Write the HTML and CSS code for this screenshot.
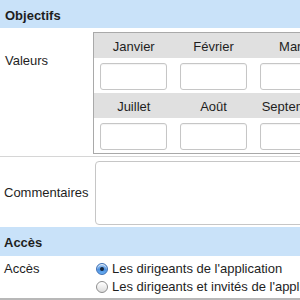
FILE: index.html
```html
<!DOCTYPE html>
<html lang="fr">
<head>
    <meta charset="UTF-8">
    <title>Objectifs</title>
    <link rel="stylesheet" href="styles.css">
</head>
<body>
    <div class="form">
        <div class="section">Objectifs</div>

        <div class="row row-values">
            <div class="label label-values">Valeurs</div>
            <div class="value">
                <table class="months">
                    <tr>
                        <th>Janvier</th><th>Février</th><th>Mars</th><th>Avril</th><th>Mai</th><th>Juin</th>
                    </tr>
                    <tr>
                        <td><input type="text"></td><td><input type="text"></td><td><input type="text"></td>
                        <td><input type="text"></td><td><input type="text"></td><td><input type="text"></td>
                    </tr>
                    <tr>
                        <th>Juillet</th><th>Août</th><th>Septembre</th><th>Octobre</th><th>Novembre</th><th>Décembre</th>
                    </tr>
                    <tr>
                        <td><input type="text"></td><td><input type="text"></td><td><input type="text"></td>
                        <td><input type="text"></td><td><input type="text"></td><td><input type="text"></td>
                    </tr>
                </table>
            </div>
        </div>

        <div class="row row-comments">
            <div class="label">Commentaires</div>
            <div class="value">
                <textarea class="comments"></textarea>
            </div>
        </div>

        <div class="section section-access">Accès</div>

        <div class="row row-access">
            <div class="label">Accès</div>
            <div class="value radios">
                <label class="radio"><span class="radio-dot checked"></span>Les dirigeants de l'application</label>
                <label class="radio"><span class="radio-dot"></span>Les dirigeants et invités de l'application</label>
            </div>
        </div>
    </div>
</body>
</html>
```

FILE: styles.css
```css
* {
    margin: 0;
    padding: 0;
    box-sizing: border-box;
}

html, body {
    overflow: hidden;
}

body {
    font-family: "Liberation Sans", Arial, sans-serif;
    font-size: 13px;
    line-height: 15px;
    color: #1e1e1e;
    background: #fff;
}

.form {
    width: 640px;
}

.section {
    background: #c9e2f9;
    font-weight: bold;
    height: 28px;
    padding: 8px 5px 0;
}

.section-access {
    height: 29px;
    padding-left: 4px;
}

.row {
    display: flex;
    border-bottom: 1px solid #d6d6d6;
}

.label {
    width: 93px;
    flex: none;
    padding-left: 4px;
}

.label-values {
    padding-left: 5px;
    padding-top: 21px;
}

.value {
    flex: 1;
}

.row-values {
    padding: 4px 0 2px;
}

.months {
    border-collapse: collapse;
    border: 1px solid #a9a9a9;
    table-layout: fixed;
}

.months th {
    width: 80px;
    height: 25px;
    background: #e0e0e0;
    font-weight: normal;
    text-align: center;
    padding-top: 2px;
}

.months td {
    height: 35px;
    padding: 5px 6px 3px;
    background: #fff;
}

.months input {
    display: block;
    width: 67px;
    height: 27px;
    border: 1px solid #c6c6c6;
    border-radius: 3px;
    box-shadow: inset 0 1px 1px rgba(0, 0, 0, 0.05);
}

.row-comments {
    align-items: center;
    padding: 4px 0 2px;
    border-bottom: none;
}

.comments {
    display: block;
    margin-left: 2px;
    width: 400px;
    height: 64px;
    border: 1px solid #c6c6c6;
    border-radius: 4px;
    resize: none;
}

.row-access {
    padding: 4px 0 2px;
    border-bottom: 3px solid #b8b8b8;
}

.row-access .label {
    line-height: 18px;
}

.radios {
    display: flex;
    flex-direction: column;
}

.radio {
    display: flex;
    align-items: center;
    height: 18px;
    white-space: nowrap;
}

.radio-dot {
    width: 12px;
    height: 12px;
    margin: 0 4px 0 3px;
    border-radius: 50%;
    border: 1px solid #8e8e8e;
    background: linear-gradient(#ffffff, #dcdcdc);
    box-shadow: inset 0 1px 1px rgba(255, 255, 255, 0.8);
    position: relative;
}

.radio-dot.checked {
    border-color: #3d6fb4;
    background: linear-gradient(#a9cdf4, #4a8fe0 55%, #6ab0f3);
}

.radio-dot.checked::after {
    content: "";
    position: absolute;
    left: 3px;
    top: 3px;
    width: 4px;
    height: 4px;
    border-radius: 50%;
    background: #14243a;
}
```
